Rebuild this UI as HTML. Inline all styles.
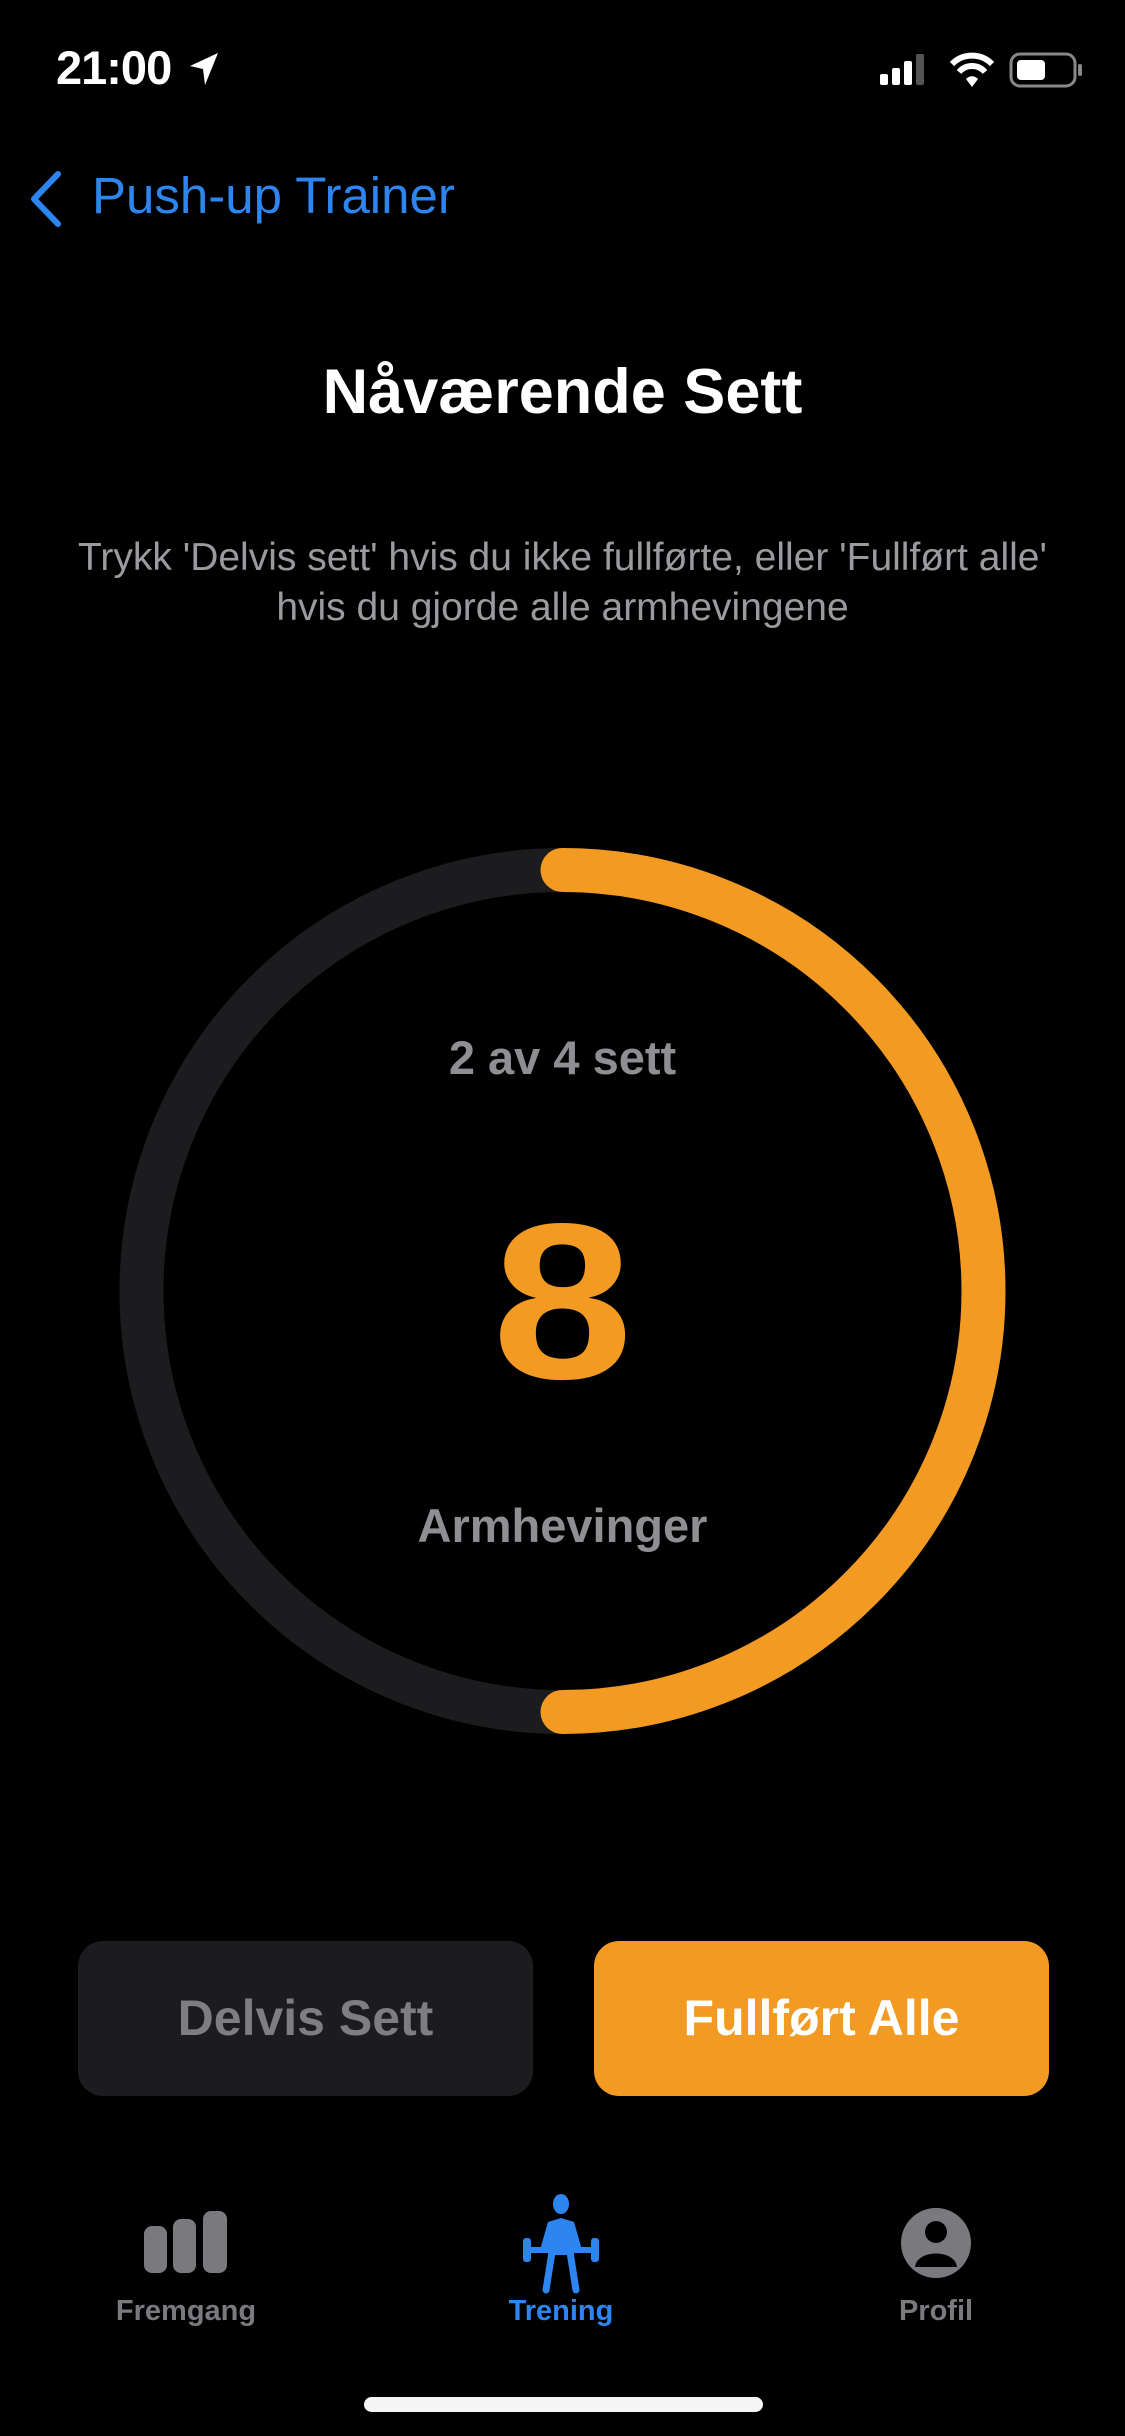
<!DOCTYPE html>
<html><head><meta charset="utf-8"><style>
*{margin:0;padding:0;box-sizing:border-box}
body{width:1125px;height:2436px;background:#000;position:relative;overflow:hidden;font-family:"Liberation Sans",sans-serif;color:#fff}
.a{position:absolute}
.c{position:absolute;left:0;width:1125px;text-align:center}
</style></head><body>
<div class="a" style="left:56px;top:40px;font-size:47px;font-weight:600;letter-spacing:-1px">21:00</div>
<svg class="a" style="left:186px;top:50px" width="36" height="38" viewBox="0 0 36 38"><path d="M32 3 L4 16 L17 19 L19 35 Z" fill="#fff"/></svg>
<svg class="a" style="left:878px;top:50px" width="210" height="40" viewBox="0 0 210 40">
<rect x="2" y="24" width="8" height="11" rx="2" fill="#fff"/><rect x="14" y="18" width="8" height="17" rx="2" fill="#fff"/><rect x="26" y="11" width="8" height="24" rx="2" fill="#fff"/><rect x="38" y="4" width="8" height="31" rx="2" fill="#555"/>
<path d="M74 14 A28 28 0 0 1 114 14" stroke="#fff" stroke-width="6" fill="none"/><path d="M81 22 A17 17 0 0 1 107 22" stroke="#fff" stroke-width="6" fill="none"/><path d="M88 29 L94 37 L100 29 A8 8 0 0 0 88 29Z" fill="#fff"/>
<rect x="133" y="4" width="64" height="32" rx="9" fill="none" stroke="#888" stroke-width="3"/><rect x="139" y="10" width="28" height="20" rx="4" fill="#fff"/><rect x="200" y="14" width="4" height="12" rx="2" fill="#888"/></svg>
<svg class="a" style="left:26px;top:170px" width="40" height="58" viewBox="0 0 40 58"><path d="M32 4 L8 29 L32 54" stroke="#2d86f0" stroke-width="6" fill="none" stroke-linecap="round" stroke-linejoin="round"/></svg>
<div class="a" style="left:92px;top:166px;font-size:51px;color:#2d86f0">Push-up Trainer</div>
<div class="c" style="top:356px;font-size:63px;font-weight:700">Nåværende Sett</div>
<div class="c" style="top:533px;font-size:39px;color:#9a9a9f;line-height:50px">Trykk 'Delvis sett' hvis du ikke fullførte, eller 'Fullført alle'<br>hvis du gjorde alle armhevingene</div>
<svg class="a" style="left:0;top:0" width="1125" height="2436">
<circle cx="562.5" cy="1291" r="421" stroke="#1c1c1e" stroke-width="44" fill="none"/>
<path d="M562.5 870 A421 421 0 0 1 562.5 1712" stroke="#f29a22" stroke-width="44" fill="none" stroke-linecap="round"/>
</svg>
<div class="c" style="top:1030px;font-size:47px;font-weight:600;color:#8e8e93">2 av 4 sett</div>
<div class="c" style="top:1172px;font-size:222px;font-weight:700;color:#f29a22;line-height:260px;transform:scaleX(1.14)">8</div>
<div class="c" style="top:1498px;font-size:47px;font-weight:600;color:#8e8e93">Armhevinger</div>
<div class="a" style="left:78px;top:1941px;width:455px;height:155px;border-radius:25px;background:#1c1c1e;color:#7d7d82;font-size:50px;font-weight:700;text-align:center;line-height:155px">Delvis Sett</div>
<div class="a" style="left:594px;top:1941px;width:455px;height:155px;border-radius:25px;background:#f29a22;color:#fff;font-size:50px;font-weight:700;text-align:center;line-height:155px">Fullført Alle</div>
<svg class="a" style="left:0;top:2190px" width="1125" height="110">
<g fill="#7a7a7e"><rect x="144" y="36" width="23" height="47" rx="8"/><rect x="173" y="29" width="23" height="54" rx="8"/><rect x="203" y="21" width="24" height="62" rx="8"/></g>
<g fill="#2d86f0" stroke="#2d86f0"><ellipse cx="561" cy="14" rx="8" ry="10" stroke="none"/><path d="M561 28 L548 32 L540 60 L582 60 L574 32 Z" stroke="none"/><path d="M528 60 H594" stroke-width="6"/><rect x="523" y="48" width="8" height="24" rx="3" stroke="none"/><rect x="591" y="48" width="8" height="24" rx="3" stroke="none"/><path d="M552 62 L546 100 M570 62 L576 100" stroke-width="7" stroke-linecap="round" fill="none"/><path d="M548 62 H574" stroke-width="6"/></g>
<circle cx="936" cy="53" r="35" fill="#7a7a7e"/><circle cx="936" cy="42" r="11" fill="#000"/><path d="M915 77 C917 59 955 59 957 77 Z" fill="#000"/>
</svg>
<div class="a" style="left:86px;top:2295px;width:200px;text-align:center;font-size:29px;font-weight:600;color:#7a7a7e">Fremgang</div>
<div class="a" style="left:461px;top:2295px;width:200px;text-align:center;font-size:29px;font-weight:600;color:#2d86f0">Trening</div>
<div class="a" style="left:836px;top:2295px;width:200px;text-align:center;font-size:29px;font-weight:600;color:#7a7a7e">Profil</div>
<div class="a" style="left:364px;top:2397px;width:399px;height:15px;border-radius:8px;background:#f5f5f5"></div>
</body></html>
